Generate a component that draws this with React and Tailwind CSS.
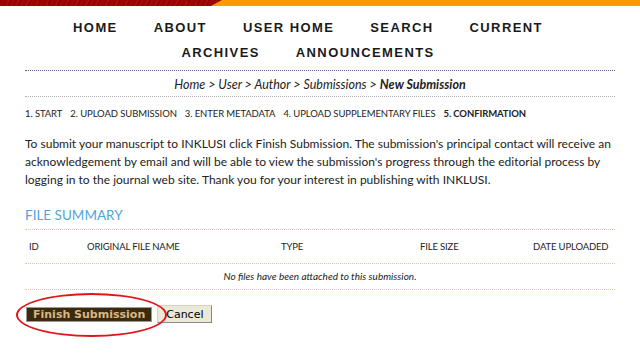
import React from 'react';

const navItems = ['HOME', 'ABOUT', 'USER HOME', 'SEARCH', 'CURRENT', 'ARCHIVES', 'ANNOUNCEMENTS'];

const steps = [
  '1. START',
  '2. UPLOAD SUBMISSION',
  '3. ENTER METADATA',
  '4. UPLOAD SUPPLEMENTARY FILES',
];

export default function App() {
  return (
    <div className="w-[640px] h-[362px] bg-white overflow-hidden font-['Lato',sans-serif] text-[#222]">
      {/* top bar */}
      <div className="h-[6px] w-full bg-[#ff9900]">
        <div className="h-full w-[222px] bg-[repeating-linear-gradient(115deg,#7a0000_0px,#b30000_3px,#8e0505_6px,#c20a0a_9px)] [clip-path:polygon(0_0,100%_0,95%_100%,0_100%)]" />
      </div>

      {/* nav */}
      <nav className="mt-[9px] ml-[25px] w-[566px] flex flex-wrap justify-center gap-x-[36px] font-['Liberation_Sans',Arial,sans-serif] font-bold text-[13px] leading-[25px] tracking-[1.4px] text-[#1a1a1a]">
        {navItems.map((item) => (
          <span key={item}>{item}</span>
        ))}
      </nav>

      <div className="px-[25px]">
        <div className="mt-[5px] border-t border-dotted border-[#5a5f8a]" />

        {/* breadcrumb */}
        <div className="h-[25px] pt-[3px] flex items-center justify-center italic text-[12.5px] text-[#222]">
          <span>Home &gt; User &gt; Author &gt; Submissions &gt; </span>
          <span className="font-bold ml-[3px]">New Submission</span>
        </div>
        <div className="border-t border-dotted border-[#b0b0b0]" />

        {/* steps */}
        <div className="mt-[10px] flex gap-x-[8px] text-[9.5px] tracking-[-0.1px] uppercase text-[#222]">
          {steps.map((s) => (
            <span key={s}>{s}</span>
          ))}
          <span className="font-bold">5. CONFIRMATION</span>
        </div>

        {/* description */}
        <p className="mt-[14px] text-[12px] leading-[18px] whitespace-nowrap text-[#222]">
          To submit your manuscript to INKLUSI click Finish Submission. The submission's principal contact will receive an
          <br />
          acknowledgement by email and will be able to view the submission's progress through the editorial process by
          <br />
          logging in to the journal web site. Thank you for your interest in publishing with INKLUSI.
        </p>

        {/* file summary */}
        <h3 className="mt-[17px] text-[13.5px] leading-[18px] text-[#4ea6dc] font-normal">FILE SUMMARY</h3>
        <div className="mt-[5px] border-t border-dotted border-[#e3c49a]" />
        <div className="h-[33px] flex items-center text-[9.5px] tracking-[-0.15px] uppercase text-[#222]">
          <span className="ml-[4px] w-[58px]">ID</span>
          <span className="w-[194px]">Original File Name</span>
          <span className="w-[139px]">Type</span>
          <span className="w-[113px]">File Size</span>
          <span>Date Uploaded</span>
        </div>
        <div className="border-t border-dotted border-[#e3c49a]" />
        <div className="h-[25px] flex items-center justify-center italic text-[10px] text-[#222]">
          No files have been attached to this submission.
        </div>
        <div className="border-t border-dotted border-[#e3c49a]" />

        {/* buttons */}
        <div className="relative mt-[15px] flex items-center gap-[5px] font-['DejaVu_Sans',Verdana,sans-serif] text-[11px]">
          <div className="absolute left-[-9px] top-[-12px] w-[151px] h-[44px] rounded-[50%] border-2 border-[#e0161b]" />
          <button className="ml-[1px] h-[15px] px-[6px] flex items-center bg-[#3a2a0e] text-[#d9b684] font-bold leading-none border border-[#9a9a9a]">
            Finish Submission
          </button>
          <button className="h-[18px] px-[8px] flex items-center bg-[#ece9d8] text-black leading-none border border-[#d6d3c4] border-r-[#8a8a8a] border-b-[#8a8a8a]">
            Cancel
          </button>
        </div>
      </div>
    </div>
  );
}
